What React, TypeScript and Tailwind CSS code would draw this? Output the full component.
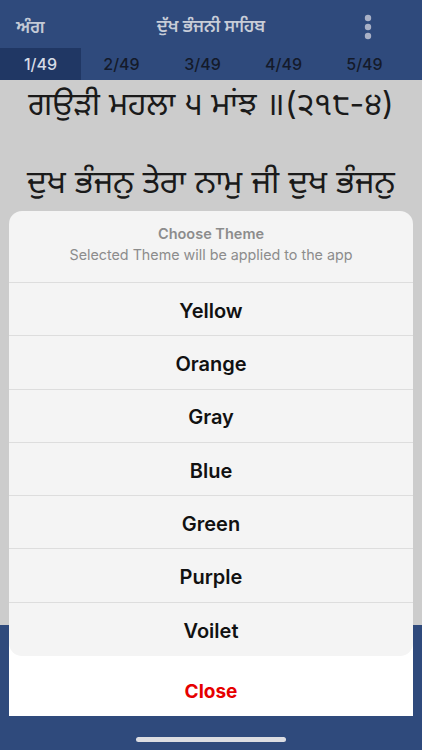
import React from "react";

const tabs = ["1/49", "2/49", "3/49", "4/49", "5/49"];
const themes = ["Yellow", "Orange", "Gray", "Blue", "Green", "Purple", "Voilet"];

function Kebab() {
  return (
    <svg width="8" height="26" viewBox="0 0 8 26" className="block">
      <circle cx="4" cy="4" r="3.2" fill="#a9b1c6" />
      <circle cx="4" cy="13" r="3.2" fill="#a9b1c6" />
      <circle cx="4" cy="22" r="3.2" fill="#a9b1c6" />
    </svg>
  );
}

export default function App() {
  return (
    <div
      className="relative w-[422px] h-[750px] overflow-hidden flex flex-col bg-[#2f4a7c]"
      style={{ fontFamily: "Inter, 'Noto Sans', 'Noto Sans Gurmukhi', sans-serif" }}
    >
      {/* Top bar */}
      <div className="h-[48px] bg-[#2f4a7c] grid grid-cols-[1fr_auto_1fr] items-center pt-[5px]">
        <div className="pl-[16px] text-[18px] font-semibold text-[#c3c9d6]">ਅੰਗ</div>
        <div className="text-[17px] font-semibold text-[#c8cdd8]">ਦੁੱਖ ਭੰਜਨੀ ਸਾਹਿਬ</div>
        <div className="flex justify-end pr-[50px]">
          <Kebab />
        </div>
      </div>

      {/* Page tabs */}
      <div className="h-[32px] flex bg-[#2f4a7c]">
        {tabs.map((t, i) => (
          <div
            key={t}
            className={`w-[81px] flex items-center justify-center text-[16px] font-medium ${
              i === 0 ? "bg-[#203764] text-[#d6dbe5]" : "text-[#141a2a]"
            }`}
          >
            {t}
          </div>
        ))}
      </div>

      <div className="h-[545px] bg-[#cccccc] flex flex-col items-center pt-[2px] text-[#1a1a1a]">
        <p className="text-[32px] leading-[44px] whitespace-nowrap">ਗਉੜੀ ਮਹਲਾ ੫ ਮਾਂਝ ॥(੨੧੮-੪)</p>
        <p className="mt-[34px] text-[32px] leading-[44px] whitespace-nowrap">ਦੁਖ ਭੰਜਨੁ ਤੇਰਾ ਨਾਮੁ ਜੀ ਦੁਖ ਭੰਜਨੁ</p>
      </div>

      <div className="flex-1 bg-[#2f4a7c]" />

      {/* Home indicator */}
      <div className="absolute left-[136px] bottom-[8px] w-[150px] h-[5px] rounded-full bg-[#dcdde2]" />

      {/* Theme action sheet */}
      <div className="absolute left-[9px] right-[9px] top-[211px]">
        <div className="relative z-10 rounded-[13px] bg-[#f4f4f4] overflow-hidden">
          <div className="h-[72px] flex flex-col items-center justify-center border-b border-[#dddddd] pb-[4px]">
            <div className="text-[14.5px] font-semibold text-[#8c8c8c] leading-[16px]">Choose Theme</div>
            <div className="mt-[5px] text-[14.3px] text-[#8c8c8c] leading-[16px]">
              Selected Theme will be applied to the app
            </div>
          </div>
          {themes.map((t, i) => (
            <div
              key={t}
              className={`h-[53.3px] flex items-center justify-center pt-[3px] text-[20px] font-semibold text-[#111111] ${
                i < themes.length - 1 ? "border-b border-[#dddddd]" : ""
              }`}
            >
              {t}
            </div>
          ))}
        </div>
        <div className="-mt-[14px] pt-[26px] h-[74px] bg-white flex items-center justify-center">
          <span className="text-[19px] font-bold text-[#e60000]">Close</span>
        </div>
      </div>
    </div>
  );
}
